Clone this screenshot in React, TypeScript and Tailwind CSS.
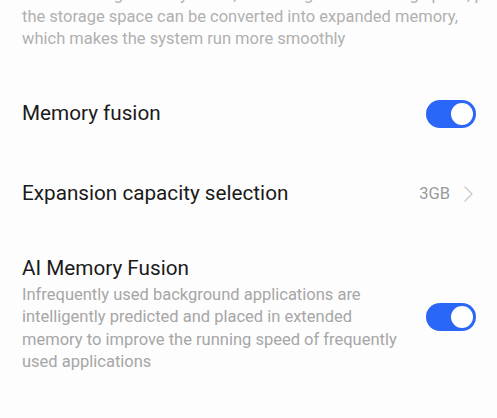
import React from "react";

const Toggle = () => (
  <div className="w-[50px] h-[28px] rounded-full bg-[#2b67f6] flex items-center justify-end px-[3px] shrink-0">
    <div className="w-[22px] h-[22px] rounded-full bg-white" />
  </div>
);

export default function App() {
  return (
    <div
      className="w-[497px] h-[418px] overflow-hidden bg-[#fdfdfd] px-[22px]"
      style={{ fontFamily: "Roboto, 'Noto Sans', sans-serif" }}
    >
      {/* Intro text, scrolled partly out of view */}
      <p className="mt-[-16px] text-[16.5px] leading-[22px] text-[#b0b0b0] whitespace-nowrap">
        When running memory is low, according to the running space, part of
        <br />
        the storage space can be converted into expanded memory,
        <br />
        which makes the system run more smoothly
      </p>

      {/* Memory fusion */}
      <div className="mt-[24px] h-[80px] flex items-center justify-between">
        <span className="text-[20.7px] text-[#1a1a1a]">Memory fusion</span>
        <div className="mr-[-1px] mt-[-1px]">
          <Toggle />
        </div>
      </div>

      {/* Expansion capacity */}
      <div className="h-[80px] flex items-center justify-between">
        <span className="text-[20.7px] text-[#1a1a1a]">Expansion capacity selection</span>
        <div className="flex items-center gap-[14px] mr-[2px]">
          <span className="text-[16.5px] text-[#9a9a9a]">3GB</span>
          <svg width="9" height="16" viewBox="0 0 9 16" fill="none">
            <path d="M1 1l7 7-7 7" stroke="#c8c8c8" strokeWidth="1.3" strokeLinecap="round" strokeLinejoin="round" />
          </svg>
        </div>
      </div>

      {/* AI Memory Fusion */}
      <div className="mt-[20px] flex items-center justify-between">
        <div>
          <div className="text-[20.7px] leading-[28px] text-[#1a1a1a]">AI Memory Fusion</div>
          <p className="mt-[2px] text-[16.5px] leading-[22.4px] text-[#a6a6a6] whitespace-nowrap">
            Infrequently used background applications are
            <br />
            intelligently predicted and placed in extended
            <br />
            memory to improve the running speed of frequently
            <br />
            used applications
          </p>
        </div>
        <div className="mr-[-1px] mt-[6px]">
          <Toggle />
        </div>
      </div>
    </div>
  );
}
